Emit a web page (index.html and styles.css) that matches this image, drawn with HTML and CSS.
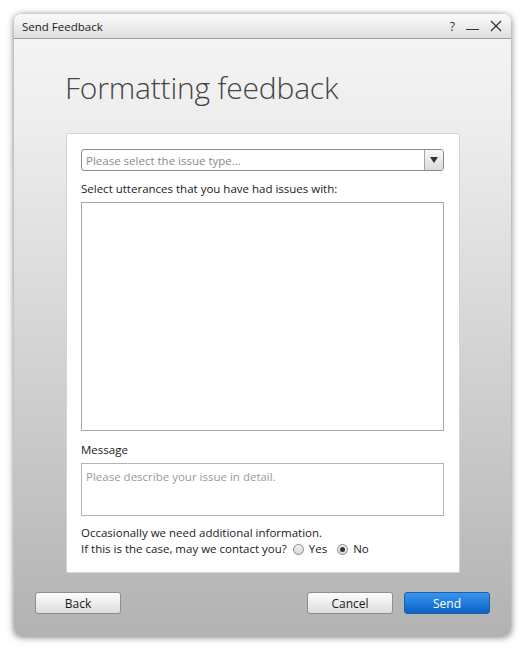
FILE: index.html
```html
<!DOCTYPE html>
<html lang="en">
<head>
    <meta charset="UTF-8">
    <title>Send Feedback</title>
    <link rel="stylesheet" href="styles.css">
</head>
<body>

<div class="window">
    <div class="titlebar">
        <span class="title">Send Feedback</span>
        <div class="controls">
            <span class="help">?</span>
            <span class="minimize"></span>
            <svg class="close" width="12" height="12" viewBox="0 0 12 12">
                <path d="M1 1 L11 11 M11 1 L1 11" stroke="#333" stroke-width="1.3" fill="none"/>
            </svg>
        </div>
    </div>

    <div class="content">
        <h1>Formatting feedback</h1>

        <div class="panel">
            <div class="select">
                <span class="placeholder">Please select the issue type...</span>
                <span class="arrow">
                    <svg width="8" height="6" viewBox="0 0 8 6"><path d="M0 0 L8 0 L4 6 Z" fill="#333"/></svg>
                </span>
            </div>

            <div class="label">Select utterances that you have had issues with:</div>
            <div class="listbox"></div>

            <div class="label message-label">Message</div>
            <div class="textarea">Please describe your issue in detail.</div>

            <div class="contact">
                <div>Occasionally we need additional information.</div>
                <div class="contact-row">
                    If this is the case, may we contact you?
                    <span class="radio"><span class="dot"></span>Yes</span>
                    <span class="radio checked"><span class="dot"></span>No</span>
                </div>
            </div>
        </div>
    </div>

    <div class="footer">
        <button class="btn">Back</button>
        <div class="right">
            <button class="btn">Cancel</button>
            <button class="btn primary">Send</button>
        </div>
    </div>
</div>

</body>
</html>
```

FILE: styles.css
```css
body {
    margin: 0;
    padding: 14px;
    background-color: #ffffff;
    font-family: "Open Sans", "Noto Sans", sans-serif;
    font-size: 11.5px;
    color: #1a1a1a;
}
.window {
    width: 497px;
    height: 622px;
    border-radius: 8px;
    overflow: hidden;
    display: flex;
    flex-direction: column;
    background: linear-gradient(#f6f6f6 0%, #ececec 20%, #cfcfcf 60%, #b2b2b2 100%);
    box-shadow: 0 1px 7px rgba(0,0,0,0.55);
}
.titlebar {
    height: 24px;
    display: flex;
    align-items: center;
    justify-content: space-between;
    padding: 0 8px;
    background: linear-gradient(#fbfbfb, #dedede);
    border-bottom: 1px solid #9a9a9a;
}
.title {
    font-size: 11.5px;
    color: #222;
}
.controls {
    display: flex;
    align-items: center;
    gap: 11px;
    padding-right: 1px;
}
.help {
    font-size: 12px;
    color: #333;
}
.minimize {
    width: 13px;
    height: 1px;
    background: #333;
    margin-top: 7px;
}
.content {
    flex: 1;
    padding: 0 52px;
}
h1 {
    font-weight: 300;
    font-size: 30px;
    color: #444;
    margin: 28px 0 0 -1px;
    line-height: 42px;
    letter-spacing: -0.2px;
}
.panel {
    margin-top: 24px;
    width: 363px;
    background: #ffffff;
    border: 1px solid #d4d4d4;
    border-radius: 2px;
    padding: 15px 15px 15px 14px;
}
.select {
    height: 20px;
    border: 1px solid #8c8c8c;
    border-radius: 3px;
    display: flex;
    align-items: center;
    justify-content: space-between;
}
.placeholder {
    color: #8a8a8a;
    padding-left: 4px;
}
.arrow {
    width: 18px;
    height: 20px;
    border-left: 1px solid #a5a5a5;
    background: linear-gradient(#f8f8f8, #dadada);
    border-radius: 0 2px 2px 0;
    display: flex;
    align-items: center;
    justify-content: center;
}
.label {
    margin-top: 10px;
    margin-bottom: 5px;
    line-height: 16px;
}
.message-label {
    margin-top: 11px;
}
.listbox {
    height: 227px;
    border: 1px solid #a8a8a8;
}
.textarea {
    height: 53px;
    border: 1px solid #b4b4b4;
    color: #9a9a9a;
    padding: 5px 4px 0;
    box-sizing: border-box;
}
.contact {
    margin-top: 9px;
    line-height: 16px;
}
.contact-row {
    display: flex;
    align-items: center;
}
.radio {
    display: flex;
    align-items: center;
    margin-left: 6px;
}
.radio + .radio {
    margin-left: 10px;
}
.dot {
    width: 9px;
    height: 9px;
    border: 1px solid #8a8a8a;
    border-radius: 50%;
    background: linear-gradient(#f2f2f2, #d8d8d8);
    margin-right: 5px;
    position: relative;
}
.checked .dot::after {
    content: "";
    position: absolute;
    left: 2px;
    top: 2px;
    width: 5px;
    height: 5px;
    border-radius: 50%;
    background: #333;
}
.footer {
    display: flex;
    justify-content: space-between;
    padding: 0 21px 22px;
}
.right {
    display: flex;
    gap: 11px;
}
.btn {
    width: 86px;
    height: 22px;
    border: 1px solid #8e8e8e;
    border-radius: 3px;
    background: linear-gradient(#fdfdfd, #dcdcdc);
    font-family: "Open Sans", "Noto Sans", sans-serif;
    font-size: 12px;
    color: #1a1a1a;
    padding: 0;
    cursor: pointer;
}
.primary {
    border-color: #1f5fa8;
    background: linear-gradient(#3994f0, #0b63c4);
    color: #ffffff;
}
```
